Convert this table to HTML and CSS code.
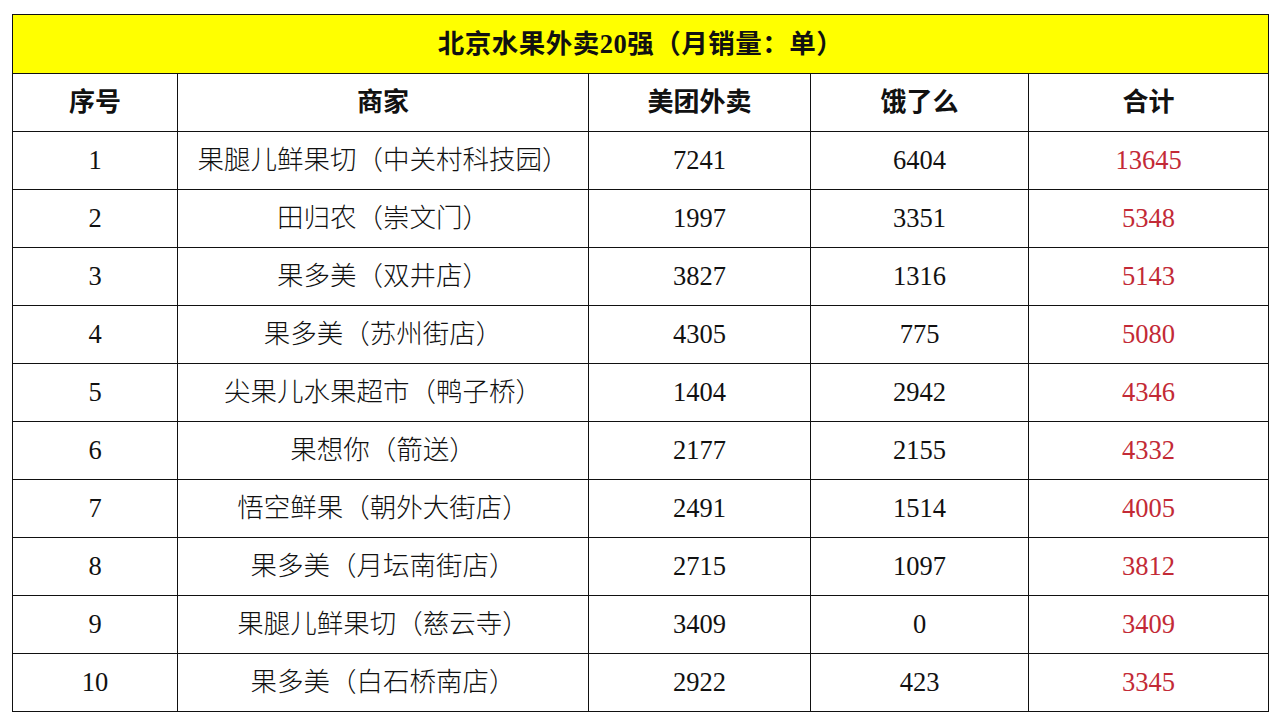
FILE: index.html
```html
<!DOCTYPE html>
<html lang="zh">
<head>
<meta charset="utf-8">
<title>北京水果外卖20强</title>
<link rel="stylesheet" href="styles.css">
</head>
<body>
<table class="rank">
  <colgroup>
    <col class="c-no">
    <col class="c-name">
    <col class="c-mt">
    <col class="c-ele">
    <col class="c-sum">
  </colgroup>
  <thead>
    <tr class="title-row"><th colspan="5">北京水果外卖20强（月销量：单）</th></tr>
    <tr class="head-row"><th>序号</th><th>商家</th><th>美团外卖</th><th>饿了么</th><th>合计</th></tr>
  </thead>
  <tbody>
    <tr><td>1</td><td>果腿儿鲜果切（中关村科技园）</td><td>7241</td><td>6404</td><td class="sum">13645</td></tr>
    <tr><td>2</td><td>田归农（崇文门）</td><td>1997</td><td>3351</td><td class="sum">5348</td></tr>
    <tr><td>3</td><td>果多美（双井店）</td><td>3827</td><td>1316</td><td class="sum">5143</td></tr>
    <tr><td>4</td><td>果多美（苏州街店）</td><td>4305</td><td>775</td><td class="sum">5080</td></tr>
    <tr><td>5</td><td>尖果儿水果超市（鸭子桥）</td><td>1404</td><td>2942</td><td class="sum">4346</td></tr>
    <tr><td>6</td><td>果想你（箭送）</td><td>2177</td><td>2155</td><td class="sum">4332</td></tr>
    <tr><td>7</td><td>悟空鲜果（朝外大街店）</td><td>2491</td><td>1514</td><td class="sum">4005</td></tr>
    <tr><td>8</td><td>果多美（月坛南街店）</td><td>2715</td><td>1097</td><td class="sum">3812</td></tr>
    <tr><td>9</td><td>果腿儿鲜果切（慈云寺）</td><td>3409</td><td>0</td><td class="sum">3409</td></tr>
    <tr><td>10</td><td>果多美（白石桥南店）</td><td>2922</td><td>423</td><td class="sum">3345</td></tr>
  </tbody>
</table>
</body>
</html>
```

FILE: styles.css
```css
html, body {
  margin: 0;
  background: #ffffff;
}
body {
  padding: 14px 12px 0 12px;
  font-family: "Liberation Serif", "Noto Sans CJK SC", serif;
  color: #111111;
}
.rank {
  border-collapse: collapse;
  table-layout: fixed;
  width: 1256px;
}
.c-no { width: 165px; }
.c-name { width: 411px; }
.c-mt { width: 222px; }
.c-ele { width: 218px; }
.c-sum { width: 240px; }
.rank th, .rank td {
  border: 1px solid #111111;
  text-align: center;
  vertical-align: middle;
  padding: 0;
  font-size: 26.5px;
  line-height: 1;
  white-space: nowrap;
}
.title-row th {
  background: #ffff00;
  height: 58px;
  font-weight: 700;
  font-size: 26.5px;
  letter-spacing: 0.5px;
}
.head-row th {
  height: 57px;
  font-weight: 700;
  font-size: 26px;
}
.rank td {
  height: 57px;
  font-weight: 300;
}
.rank td.sum {
  color: #c32a36;
}
```
